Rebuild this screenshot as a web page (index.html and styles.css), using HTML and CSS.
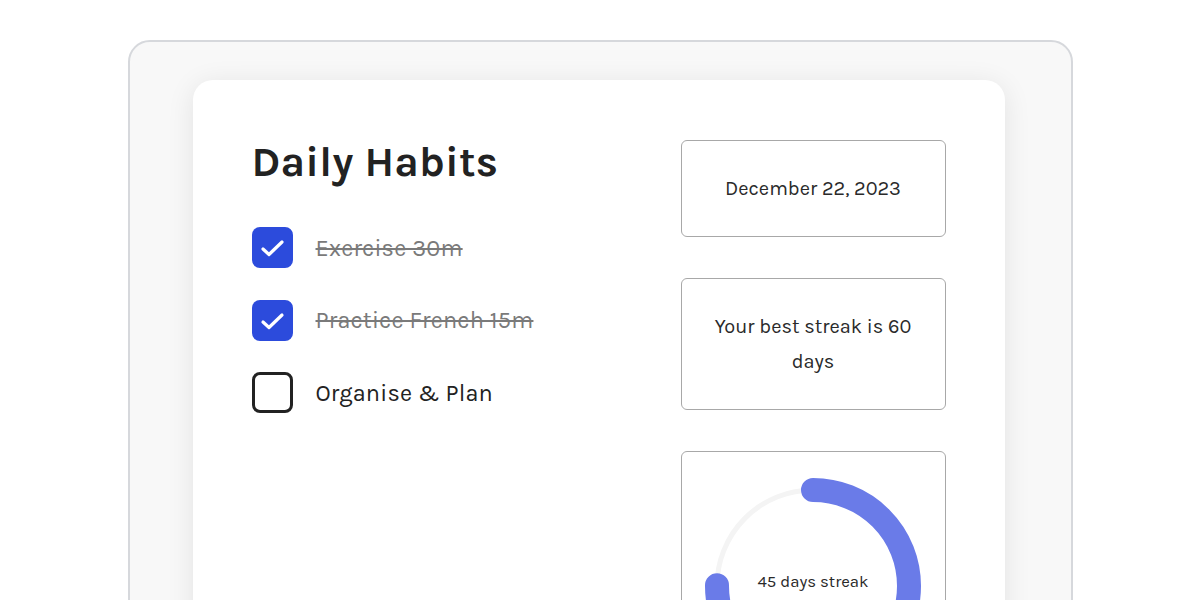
FILE: index.html
```html
<!DOCTYPE html>
<html lang="en">
<head>
<meta charset="utf-8">
<title>Daily Habits</title>
<link rel="stylesheet" href="styles.css">
</head>
<body>
<div class="frame">
  <main class="card">
    <section class="habits">
      <h1 class="title">Daily Habits</h1>
      <ul class="list">
        <li class="item done">
          <span class="box checked">
            <svg width="41" height="41" viewBox="0 0 41 41"><path d="M11 22 L17 27.5 L30 15" fill="none" stroke="#fff" stroke-width="3.2" stroke-linecap="round" stroke-linejoin="round"/></svg>
          </span>
          <span class="label">Exercise 30m</span>
        </li>
        <li class="item done">
          <span class="box checked">
            <svg width="41" height="41" viewBox="0 0 41 41"><path d="M11 22 L17 27.5 L30 15" fill="none" stroke="#fff" stroke-width="3.2" stroke-linecap="round" stroke-linejoin="round"/></svg>
          </span>
          <span class="label">Practice French 15m</span>
        </li>
        <li class="item">
          <span class="box"></span>
          <span class="label">Organise &amp; Plan</span>
        </li>
      </ul>
    </section>
    <aside class="side">
      <div class="info">December 22, 2023</div>
      <div class="info">Your best streak is 60 days</div>
      <div class="info chart">
        <div class="ring">
          <svg width="216" height="216" viewBox="0 0 216 216">
            <circle cx="108" cy="108" r="96" fill="none" stroke="#f4f4f4" stroke-width="5"/>
            <circle cx="108" cy="108" r="96" fill="none" stroke="#6a7be8" stroke-width="24" stroke-linecap="round" stroke-dasharray="452.4 603.2" transform="rotate(-90 108 108)"/>
          </svg>
          <span class="ring-label">45 days streak</span>
        </div>
      </div>
    </aside>
  </main>
</div>
</body>
</html>
```

FILE: styles.css
```css
* { box-sizing: border-box; }
html, body { margin: 0; padding: 0; background: #ffffff; }
body {
  font-family: "Karla", "Inter", "Roboto", sans-serif;
  color: #222;
  padding-top: 40px;
  height: 600px;
  overflow: hidden;
}
.frame {
  width: 945px;
  margin: 0 auto;
  border: 2px solid #d6d8dc;
  border-radius: 22px;
  background: #f8f8f8;
  padding: 38px 66px 0 63px;
  height: 700px;
}
.card {
  background: #fff;
  border-radius: 20px;
  box-shadow: 0 4px 28px rgba(0, 0, 0, 0.09);
  padding: 60px 59px;
  display: grid;
  grid-template-columns: 1fr 265px;
  gap: 40px;
  min-height: 640px;
}
.title {
  margin: 0 0 43px;
  font-size: 42px;
  line-height: 44px;
  font-weight: 700;
  letter-spacing: 0.2px;
  color: #222;
}
.list {
  list-style: none;
  margin: 0;
  padding: 0;
  display: flex;
  flex-direction: column;
  gap: 31.5px;
}
.item {
  display: flex;
  align-items: center;
  gap: 23px;
  font-size: 23.5px;
}
.box {
  width: 41px;
  height: 41px;
  flex: none;
  border-radius: 8px;
  border: 3px solid #222;
  display: flex;
  align-items: center;
  justify-content: center;
}
.box.checked {
  border: none;
  background: #2c4bdc;
}
.label { color: #222; letter-spacing: 0.2px; }
.done .label {
  color: #7a7a7a;
  text-decoration: line-through;
  text-decoration-thickness: 2px;
}
.side {
  display: flex;
  flex-direction: column;
  gap: 41px;
}
.info {
  border: 1.5px solid #a8a8a8;
  border-radius: 6px;
  padding: 30px 18px;
  text-align: center;
  font-size: 20px;
  line-height: 35px;
  color: #2a2a2a;
}
.chart {
  padding: 26px 0 30px;
  display: flex;
  justify-content: center;
}
.ring {
  position: relative;
  width: 216px;
  height: 216px;
}
.ring svg { display: block; }
.ring-label {
  position: absolute;
  left: 0;
  right: 0;
  top: 92px;
  text-align: center;
  font-size: 16.8px;
  line-height: 24px;
  color: #2a2a2a;
}
```
